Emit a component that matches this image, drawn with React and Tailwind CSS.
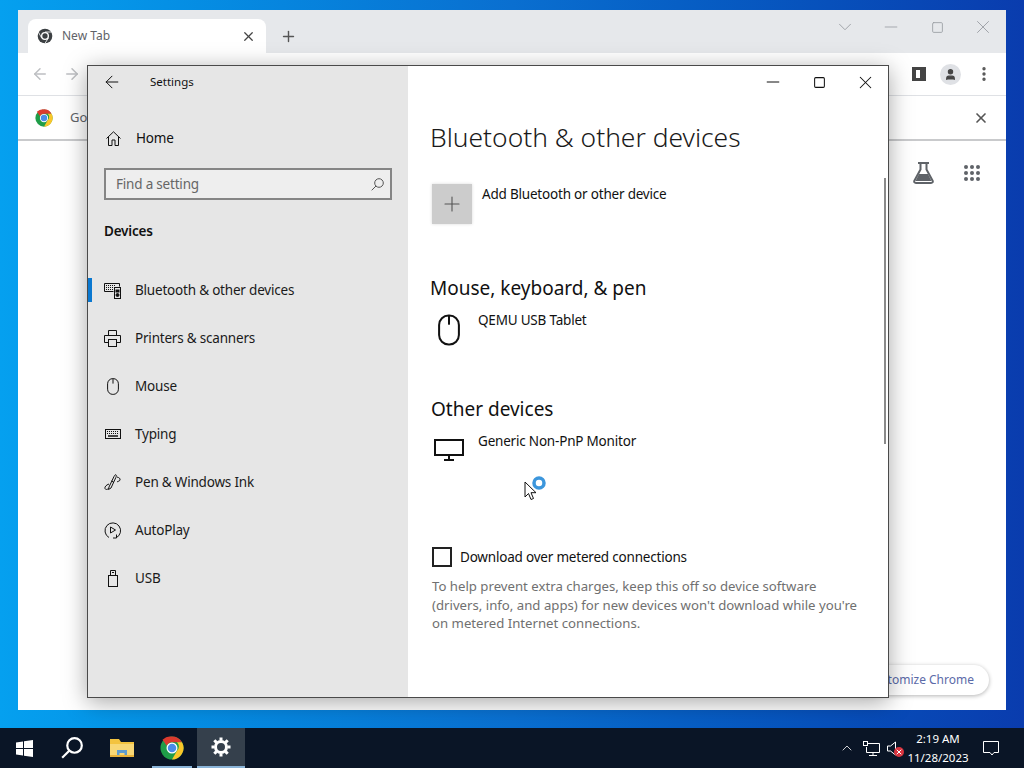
import { ArrowLeft, ArrowRight, X, Plus, Minus, Square, ChevronDown, MoreVertical, User, ChevronUp } from "lucide-react";

function ChromeLogo({ size = 24 }) {
  return (
    <svg width={size} height={size} viewBox="0 0 48 48">
      <circle cx="24" cy="24" r="23" fill="#1f9d48" />
      <path d="M24 1a23 23 0 0 1 20 11.5H24a11.5 11.5 0 0 0-10.5 7L5 7.5A23 23 0 0 1 24 1z" fill="#db3a2e" />
      <path d="M44 12.5A23 23 0 0 1 24 47l10-17.5a11.5 11.5 0 0 0 0-17z" fill="#fbc629" />
      <circle cx="24" cy="24" r="11" fill="#fff" />
      <circle cx="24" cy="24" r="8.5" fill="#4a8be8" />
    </svg>
  );
}

function MonoChrome() {
  return (
    <svg width="16" height="16" viewBox="0 0 48 48">
      <circle cx="24" cy="24" r="22" fill="#3c4043" />
      <circle cx="24" cy="24" r="12" fill="#fff" />
      <circle cx="24" cy="24" r="8" fill="#3c4043" />
      <path d="M24 12h20M14 30 4 12M34 30 24 46" stroke="#fff" strokeWidth="2.5" />
    </svg>
  );
}

function DevicesIcon() {
  return (
    <svg width="17" height="17" viewBox="0 0 17 17" fill="none" stroke="#111" strokeWidth="1">
      <path d="M9.5 9.5H.5v-8h15v3" />
      <path d="M2 3.5h10M2 5.5h10M2 7.5h7" strokeDasharray="1 1" />
      <rect x="10.5" y="5.5" width="6" height="11" />
      <rect x="12" y="8" width="3" height="2" fill="#111" />
      <circle cx="13.5" cy="13" r="1.5" fill="#111" />
    </svg>
  );
}

function PrinterIcon() {
  return (
    <svg width="17" height="17" viewBox="0 0 17 17" fill="none" stroke="#111" strokeWidth="1">
      <path d="M4.5 5.5v-5h8v5M4.5 12.5h-4v-7h16v7h-4" />
      <rect x="4.5" y="9.5" width="8" height="7" />
    </svg>
  );
}

function MouseIcon({ w = 12, h = 17, stroke = 1 }) {
  return (
    <svg width={w} height={h} viewBox="0 0 12 17" fill="none" stroke="#111" strokeWidth={stroke}>
      <rect x="0.6" y="0.6" width="10.8" height="15.8" rx="5.2" />
      <path d="M6 .6v5" />
    </svg>
  );
}

function KeyboardIcon() {
  return (
    <svg width="16" height="10" viewBox="0 0 16 10" fill="none" stroke="#111" strokeWidth="1">
      <rect x="0.5" y="0.5" width="15" height="9" />
      <path d="M2 2.5h12M2 4.5h12" strokeDasharray="1 1" />
      <path d="M3 7h10" strokeWidth="1.5" />
    </svg>
  );
}

function PenIcon() {
  return (
    <svg width="17" height="17" viewBox="0 0 17 17" fill="none" stroke="#111" strokeWidth="1">
      <path d="M5 13 10 2.500c.6-1.300 1.500-2 2-1.700.6.300.4 1.400-.1 2.600L7 14l-2.500 1.500z" />
      <path d="M7.500 7 10 8.500M13 3c2 .5 3.500 1.500 3 3s-2 1-3 2" />
      <path d="M5 10c-3 1-4.500 3-4 4.500s2.500 1 3.500 0" />
    </svg>
  );
}

function AutoPlayIcon() {
  return (
    <svg width="17" height="17" viewBox="0 0 17 17" fill="none" stroke="#111" strokeWidth="1">
      <path d="M5 15.500A7.800 7.800 0 1 1 12 15.800" />
      <path d="M6.500 5v6l5-3z" />
      <path d="M12.500 12.500v3.500H9" />
    </svg>
  );
}

function UsbIcon() {
  return (
    <svg width="10" height="17" viewBox="0 0 10 17" fill="none" stroke="#111" strokeWidth="1">
      <rect x="0.5" y="5.500" width="9" height="11" />
      <path d="M2.500 5.500v-5h5v5" />
      <path d="M4 2.500h2" />
    </svg>
  );
}

function HomeIcon() {
  return (
    <svg width="15" height="15" viewBox="0 0 15 15" fill="none" stroke="#111" strokeWidth="1">
      <path d="M.5 7.500 7.500.8l7 6.700M2.500 6v8.500h3.500V9h3v5.500h3.500V6" />
    </svg>
  );
}

function SearchGlass({ size = 13, color = "#555", sw = 1 }) {
  return (
    <svg width={size} height={size} viewBox="0 0 13 13" fill="none" stroke={color} strokeWidth={sw}>
      <circle cx="8" cy="5" r="4.300" />
      <path d="M5 8 .7 12.300" />
    </svg>
  );
}

function MonitorIcon() {
  return (
    <svg width="30" height="22" viewBox="0 0 30 22" fill="none" stroke="#111" strokeWidth="2">
      <rect x="1" y="1" width="28" height="15" />
      <path d="M15 16v4M10 21h10" />
    </svg>
  );
}

function FlaskIcon() {
  return (
    <svg width="21" height="22" viewBox="0 0 21 22" fill="none">
      <path d="M5 1h11M7.500 1v6.500L1.500 18.500c-.8 1.500 0 2.500 1.500 2.500h15c1.500 0 2.300-1 1.500-2.500l-6-11V1" stroke="#5f6368" strokeWidth="2" />
      <path d="M6 12h9l3.500 7h-16z" fill="#5f6368" />
    </svg>
  );
}

function Windows() {
  return (
    <svg width="17" height="17" viewBox="0 0 17 17" fill="#fff">
      <path d="M0 2.500 7 1.500V8H0zM8 1.300 17 0v8H8zM0 9h7v6.500l-7-1zM8 9h9v8l-9-1.300z" />
    </svg>
  );
}

function Folder() {
  return (
    <svg width="24" height="20" viewBox="0 0 24 20">
      <path d="M0 1h9l2 3h13v15H0z" fill="#f3c33f" />
      <path d="M0 6h24v13H0z" fill="#f8d775" />
      <path d="M7 12h10v7h-2.500v-4h-5v4H7z" fill="#5d9bd0" />
      <path d="M0 17h24v2H0z" fill="#e8b23a" />
    </svg>
  );
}

function Gear() {
  return (
    <svg width="20" height="20" viewBox="0 0 20 20" fill="none" stroke="#fff">
      <circle cx="10" cy="10" r="5.500" strokeWidth="3" />
      <path d="M10 0.500v3M10 16.500v3M.5 10h3M16.500 10h3M3.300 3.300l2.100 2.100M14.600 14.600l2.100 2.100M3.300 16.700l2.100-2.100M14.600 5.400l2.100-2.100" strokeWidth="3" />
    </svg>
  );
}

function NetworkIcon() {
  return (
    <svg width="17" height="15" viewBox="0 0 17 15" fill="none" stroke="#fff" strokeWidth="1">
      <path d="M4.500 2.500h12v9h-13V6M10 11.500v3M6 14.500h8" />
      <rect x="0.500" y="0.500" width="4" height="4" fill="#0a1526" />
    </svg>
  );
}

function VolumeMuted() {
  return (
    <span className="relative flex h-[15px] w-[18px]">
      <svg width="10" height="15" viewBox="0 0 10 15" fill="none" stroke="#fff" strokeWidth="1">
        <path d="M.5 5h3L8.500 1v13l-5-4h-3z" />
      </svg>
      <span className="absolute left-[7px] top-[6px] flex h-[10px] w-[10px] items-center justify-center rounded-full bg-[#d8343f] text-white">
        <X size={8} strokeWidth={3} />
      </span>
    </span>
  );
}

const navItems = [
  { label: "Bluetooth & other devices", icon: <DevicesIcon />, active: true },
  { label: "Printers & scanners", icon: <PrinterIcon /> },
  { label: "Mouse", icon: <MouseIcon /> },
  { label: "Typing", icon: <KeyboardIcon /> },
  { label: "Pen & Windows Ink", icon: <PenIcon /> },
  { label: "AutoPlay", icon: <AutoPlayIcon /> },
  { label: "USB", icon: <UsbIcon /> },
];

function ChromeWindow() {
  return (
    <div className="absolute left-[18px] top-[10px] flex h-[700px] w-[988px] flex-col bg-white text-[#5f6368]">
      <div className="flex h-[43px] items-end bg-[#e6e8eb] pl-[10px]">
        <div className="flex h-[34px] w-[238px] items-center rounded-t-lg bg-white pl-[9px] pr-[10px]">
          <MonoChrome />
          <span className="ml-[9px] flex-1 text-[12px] text-[#5f6368]">New Tab</span>
          <X size={15} strokeWidth={2} className="text-[#444]" />
        </div>
        <div className="ml-[14px] flex h-[34px] items-center">
          <Plus size={17} strokeWidth={2} className="text-[#555]" />
        </div>
        <div className="ml-auto flex h-full items-start pt-[7px] text-[#9a9ea3]">
          <span className="flex h-[20px] w-[46px] items-center justify-center"><ChevronDown size={22} strokeWidth={1} /></span>
          <span className="flex h-[20px] w-[46px] items-center justify-center"><Minus size={20} strokeWidth={1} /></span>
          <span className="flex h-[20px] w-[46px] items-center justify-center"><Square size={13} strokeWidth={1.600} /></span>
          <span className="flex h-[20px] w-[46px] items-center justify-center"><X size={22} strokeWidth={1} /></span>
        </div>
      </div>
      <div className="flex h-[43px] items-center border-b border-[#dfe1e5] pl-[13px] pr-[13px]">
        <ArrowLeft size={18} strokeWidth={2} className="text-[#bdbfc2]" />
        <ArrowRight size={18} strokeWidth={2} className="ml-[14px] text-[#bdbfc2]" />
        <div className="ml-auto flex items-center gap-[14px]">
          <span className="h-[14px] w-[14px] border-[3px] border-l-[4px] border-r-[6px] border-[#444]" />
          <span className="flex h-[21px] w-[21px] items-center justify-center rounded-full bg-[#dfe1e5]">
            <User size={13} fill="#444" className="text-[#444]" />
          </span>
          <MoreVertical size={18} strokeWidth={2.500} className="text-[#555]" />
        </div>
      </div>
      <div className="flex h-[45px] items-center border-b-2 border-[#c9cacc] pl-[17px] pr-[17px]">
        <ChromeLogo size={18} />
        <span className="ml-[17px] text-[13px] text-[#5f6368]">Go</span>
        <X size={16} strokeWidth={2.500} className="ml-auto text-[#555]" />
      </div>
      <div className="flex justify-end gap-[30px] pr-[26px] pt-[21px]">
        <FlaskIcon />
        <div className="grid h-[16px] w-[16px] grid-cols-3 gap-[2px] self-center">
          {Array.from({ length: 9 }).map((_, i) => (
            <span key={i} className="h-[4px] w-[4px] rounded-full bg-[#5f6368]" />
          ))}
        </div>
      </div>
      <div className="mt-auto flex justify-end pb-[15px] pr-[17px]">
        <div className="flex h-[30px] w-[140px] items-center justify-end rounded-full bg-white pr-[15px] text-[12px] text-[#5b6aa8] shadow-[0_1px_4px_rgba(0,0,0,0.3)]">
          tomize Chrome
        </div>
      </div>
    </div>
  );
}

function SettingsWindow() {
  return (
    <div className="absolute left-[87px] top-[65px] flex h-[633px] w-[802px] border border-[#4a4a4a] bg-white text-[#111] shadow-[0_4px_22px_rgba(0,0,0,0.35)]">
      <div className="flex w-[320px] flex-col bg-[#e6e6e6] text-[13.500px] tracking-[-0.2px]">
        <div className="flex h-[32px] items-center pl-[14px]">
          <ArrowLeft size={20} strokeWidth={1.200} />
          <span className="ml-[28px] text-[11.500px] tracking-normal">Settings</span>
        </div>
        <div className="mt-[28px] flex h-[24px] items-center pl-[18px]">
          <HomeIcon />
          <span className="ml-[15px]">Home</span>
        </div>
        <div className="ml-[16px] mt-[18px] flex h-[32px] w-[288px] items-center justify-between border-2 border-[#858585] bg-[#eeeeee] pl-[10px] pr-[6px]">
          <span className="text-[#666]">Find a setting</span>
          <SearchGlass />
        </div>
        <div className="ml-[16px] mt-[21px] font-semibold">Devices</div>
        <div className="mt-[25px] flex flex-col">
          {navItems.map((item) => (
            <div key={item.label} className="relative flex h-[48px] items-center">
              {item.active && <span className="absolute left-0 top-[12px] h-[24px] w-[4px] bg-[#0a78d0]" />}
              <span className="ml-[16px] flex w-[17px] justify-center">{item.icon}</span>
              <span className="ml-[14px] text-[#1a1a1a]">{item.label}</span>
            </div>
          ))}
        </div>
      </div>
      <div className="relative flex-1 pl-[22px] text-[13.500px] tracking-[-0.2px]">
        <div className="absolute right-0 top-0 flex h-[32px] items-center">
          <span className="flex w-[46px] justify-center"><Minus size={20} strokeWidth={1.200} /></span>
          <span className="flex w-[46px] justify-center"><Square size={13} strokeWidth={1.900} /></span>
          <span className="flex w-[46px] justify-center"><X size={21} strokeWidth={1.200} /></span>
        </div>
        <span className="absolute right-[2px] top-[112px] h-[266px] w-[2px] bg-[#8a8a8a]" />
        <h1 className="pt-[52px] text-[26.400px] font-light leading-[38px] tracking-normal text-[#1a1a1a]">Bluetooth &amp; other devices</h1>
        <div className="mt-[28px] flex items-start">
          <div className="ml-[2px] flex h-[40px] w-[40px] items-center justify-center bg-[#cccccc] text-[#555] shadow-[0_0_3px_rgba(0,0,0,0.15)]">
            <Plus size={24} strokeWidth={1.100} />
          </div>
          <span className="ml-[10px]">Add Bluetooth or other device</span>
        </div>
        <h2 className="mt-[50px] text-[19px] leading-[28px] tracking-normal">Mouse, keyboard, &amp; pen</h2>
        <div className="mt-[8px] flex items-start">
          <span className="ml-[8px] mt-[4px]"><MouseIcon w={22} h={32} stroke={1.100} /></span>
          <span className="ml-[18px]">QEMU USB Tablet</span>
        </div>
        <h2 className="ml-[1px] mt-[49px] text-[19px] leading-[28px] tracking-normal">Other devices</h2>
        <div className="mt-[8px] flex items-start">
          <span className="ml-[4px] mt-[8px]"><MonitorIcon /></span>
          <span className="ml-[14px]">Generic Non-PnP Monitor</span>
        </div>
        <label className="ml-[2px] mt-[86px] flex items-center">
          <span className="h-[20px] w-[20px] border-2 border-[#222]" />
          <span className="ml-[8px]">Download over metered connections</span>
        </label>
        <p className="ml-[2px] mt-[10px] w-[430px] text-[13.200px] leading-[18.500px] tracking-normal text-[#707070]">
          To help prevent extra charges, keep this off so device software (drivers, info, and apps) for new devices won't download while you're on metered Internet connections.
        </p>
      </div>
    </div>
  );
}

function Cursor() {
  return (
    <div className="absolute left-[524px] top-[476px]">
      <svg width="24" height="26" viewBox="0 0 24 26">
        <path d="M1 6v15l3.500-3.500 2.500 6 2.500-1-2.500-5.800h5z" fill="#fff" stroke="#111" strokeWidth="1" />
        <circle cx="15" cy="7" r="5" fill="#fff" stroke="#3c96dc" strokeWidth="3.500" />
      </svg>
    </div>
  );
}

function Taskbar() {
  return (
    <div className="absolute inset-x-0 bottom-0 flex h-[40px] items-center bg-[#0a1526] text-white">
      <div className="flex h-full w-[48px] items-center justify-center"><Windows /></div>
      <div className="flex h-full w-[48px] items-center justify-center"><SearchGlass size={22} color="#fff" sw={1.300} /></div>
      <div className="flex h-full w-[52px] items-center justify-center"><Folder /></div>
      <div className="relative flex h-full w-[48px] items-center justify-center">
        <ChromeLogo size={24} />
        <span className="absolute bottom-0 left-[4px] right-[4px] h-[2px] bg-[#8ab4d8]" />
      </div>
      <div className="ml-[1px] flex h-full w-[48px] items-center justify-center border-b-2 border-[#8ab4d8] bg-[#35404c]"><Gear /></div>
      <div className="ml-auto flex h-full items-center">
        <ChevronUp size={16} strokeWidth={1.200} />
        <span className="ml-[8px]"><NetworkIcon /></span>
        <span className="ml-[7px]"><VolumeMuted /></span>
        <div className="ml-[2px] flex w-[62px] flex-col items-center text-[11.500px] leading-[19px]">
          <span>2:19 AM</span>
          <span>11/28/2023</span>
        </div>
        <svg className="ml-[14px] mr-[25px]" width="16" height="15" viewBox="0 0 16 15" fill="none" stroke="#fff" strokeWidth="1">
          <path d="M.5.5h15v11h-4.500l-2 2.500-2-2.500h-6.500z" />
        </svg>
      </div>
    </div>
  );
}

export default function App() {
  return (
    <div className="relative h-[768px] w-[1024px] overflow-hidden bg-gradient-to-r from-[#05a0ef] via-[#0a6fd0] to-[#0a3cae] font-['Noto_Sans','Open_Sans',sans-serif]">
      <ChromeWindow />
      <SettingsWindow />
      <Cursor />
      <Taskbar />
    </div>
  );
}
